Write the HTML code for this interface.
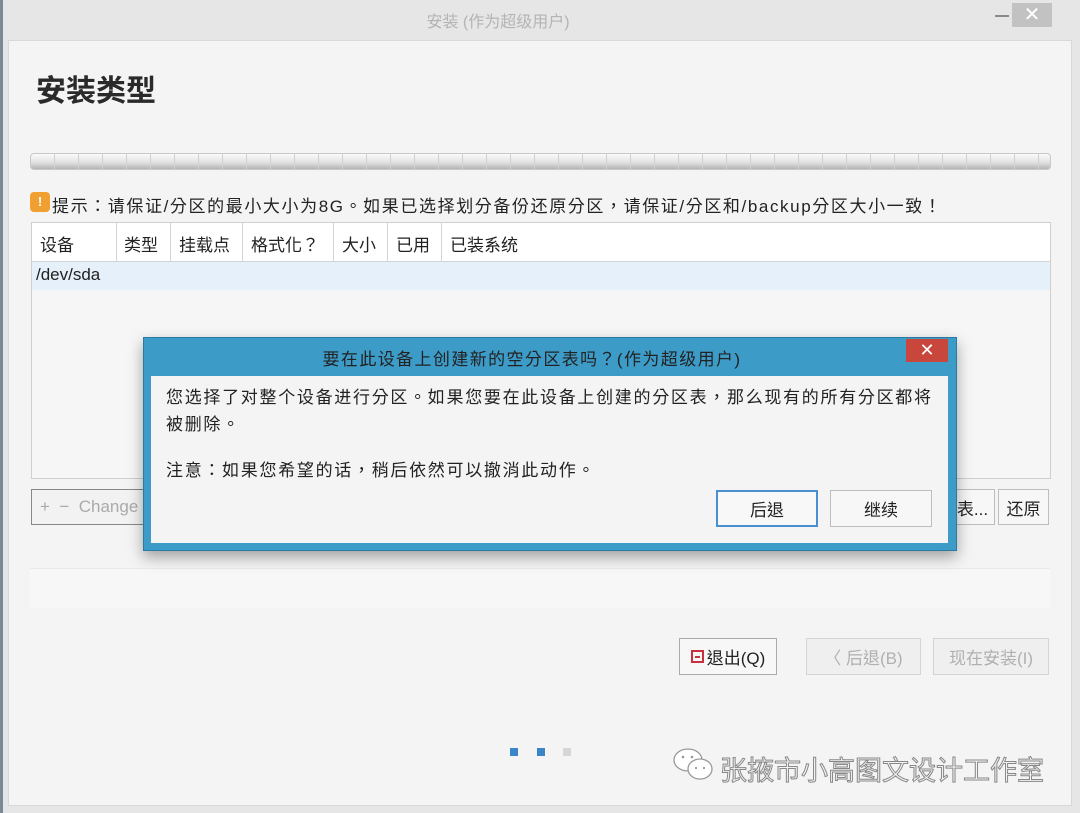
<!DOCTYPE html>
<html><head><meta charset="utf-8"><style>
*{margin:0;padding:0;box-sizing:border-box}
body{width:1080px;height:813px;background:#e6e6e6;position:relative;overflow:hidden;font-family:"Liberation Sans","Noto Sans CJK TC",sans-serif;color:#222}
.a{position:absolute}
.win{left:8px;top:40px;width:1064px;height:766px;background:#f4f4f4;border:1px solid #d8d8d8}
.btn{position:absolute;border:1px solid #bdbdbd;background:#f7f7f7;font-size:17px;text-align:center;display:flex;align-items:center;justify-content:center}
</style></head><body>
<div class="a" style="left:0;top:0;width:3px;height:813px;background:#7a8a95"></div>
<div class="a" style="left:0;top:8px;width:1080px;text-align:center;font-size:16px;color:#b4b4b4"><span style="position:relative;left:-42px">安装 (作为超级用户)</span></div>
<div class="a" style="left:995px;top:15px;width:14px;height:2px;background:#8a8a8a"></div>
<div class="a" style="left:1012px;top:3px;width:40px;height:24px;background:#c2c2c2;color:#fff;font-size:20px;text-align:center;line-height:24px">✕</div>
<div class="a win"></div>
<div class="a" style="left:36px;top:66px;font-size:30px;font-weight:bold;color:#2a2a2a">安装类型</div>
<div class="a" style="left:30px;top:153px;width:1021px;height:17px;border-radius:4px;border:1px solid #c8c8c8;background-image:repeating-linear-gradient(90deg,transparent 0 23px,#d0d0d0 23px 24px),linear-gradient(#fafafa,#e2e2e2 55%,#b5b5b5)"></div>
<div class="a" style="left:30px;top:192px;width:20px;height:20px;border-radius:4px;background:#f0a030;color:#fff;font-size:13px;text-align:center;line-height:20px;font-weight:bold">!</div>
<div class="a" style="left:52px;top:192px;font-size:17px;color:#222;white-space:nowrap;letter-spacing:1.6px">提示：请保证/分区的最小大小为8G。如果已选择划分备份还原分区，请保证/分区和/backup分区大小一致！</div>
<div class="a" style="left:31px;top:222px;width:1020px;height:257px;background:#f6f6f6;border:1px solid #cfcfcf"></div>
<div class="a" style="left:32px;top:223px;width:1018px;height:39px;background:#fff;border-bottom:1px solid #d4d4d4"></div>
<div class="a" style="left:32px;top:262px;width:1018px;height:28px;background:#e5f0fb"></div>
<div class="a" style="left:116px;top:223px;width:1px;height:39px;background:#d4d4d4"></div>
<div class="a" style="left:170px;top:223px;width:1px;height:39px;background:#d4d4d4"></div>
<div class="a" style="left:242px;top:223px;width:1px;height:39px;background:#d4d4d4"></div>
<div class="a" style="left:333px;top:223px;width:1px;height:39px;background:#d4d4d4"></div>
<div class="a" style="left:387px;top:223px;width:1px;height:39px;background:#d4d4d4"></div>
<div class="a" style="left:441px;top:223px;width:1px;height:39px;background:#d4d4d4"></div>
<div class="a" style="top:231px;left:40px;font-size:17px">设备</div>
<div class="a" style="top:231px;left:124px;font-size:17px">类型</div>
<div class="a" style="top:231px;left:179px;font-size:17px">挂载点</div>
<div class="a" style="top:231px;left:251px;font-size:17px">格式化？</div>
<div class="a" style="top:231px;left:342px;font-size:17px">大小</div>
<div class="a" style="top:231px;left:396px;font-size:17px">已用</div>
<div class="a" style="top:231px;left:450px;font-size:17px">已装系统</div>
<div class="a" style="top:265px;left:36px;font-size:17px">/dev/sda</div>
<div class="a" style="left:31px;top:489px;width:200px;height:36px;border:1px solid #888;background:#f2f2f2;color:#aaa;font-size:17px;padding:7px 0 0 8px">+&nbsp;&nbsp;−&nbsp;&nbsp;Change</div>
<div class="btn" style="left:950px;top:489px;width:45px;height:36px">表...</div>
<div class="btn" style="left:998px;top:489px;width:51px;height:36px">还原</div>
<div class="a" style="left:30px;top:568px;width:1020px;height:40px;background:#f7f7f7;border-top:1px solid #eaeaea"></div>
<!-- dialog -->
<div class="a" style="left:143px;top:337px;width:814px;height:214px;background:#3d9bc8;border:1px solid #2d7aa0;box-shadow:0 6px 14px rgba(0,0,0,.35)"></div>
<div class="a" style="left:143px;top:345px;width:814px;text-align:center;font-size:17px;color:#222;letter-spacing:1.4px"><span style="position:relative;left:-18px">要在此设备上创建新的空分区表吗？(作为超级用户)</span></div>
<div class="a" style="left:906px;top:339px;width:42px;height:23px;background:#c9463d;color:#fff;text-align:center;font-size:18px;line-height:23px">✕</div>
<div class="a" style="left:151px;top:376px;width:797px;height:167px;background:#f4f4f4"></div>
<div class="a" style="left:166px;top:384px;width:790px;font-size:17px;line-height:27px;letter-spacing:1.7px;white-space:nowrap">您选择了对整个设备进行分区。如果您要在此设备上创建的分区表，那么现有的所有分区都将<br>被删除。</div>
<div class="a" style="left:166px;top:456px;font-size:17px;letter-spacing:1.7px">注意：如果您希望的话，稍后依然可以撤消此动作。</div>
<div class="btn" style="left:716px;top:490px;width:102px;height:37px;border:2px solid #4a90d0;background:#f8f8f8">后退</div>
<div class="btn" style="left:830px;top:490px;width:102px;height:37px">继续</div>
<!-- bottom -->
<div class="btn" style="left:679px;top:638px;width:98px;height:37px;border-color:#aaa"><span style="display:inline-block;width:13px;height:13px;border:2px solid #c83040;margin-right:3px;position:relative"><span style="position:absolute;left:2px;top:4px;width:5px;height:2px;background:#c83040"></span></span>退出(Q)</div>
<div class="btn" style="left:806px;top:638px;width:115px;height:37px;color:#b0b0b0;background:#efefef;border-color:#d4d4d4">〈 后退(B)</div>
<div class="btn" style="left:933px;top:638px;width:116px;height:37px;color:#b0b0b0;background:#efefef;border-color:#d4d4d4">现在安装(I)</div>
<div class="a" style="left:510px;top:748px;width:8px;height:8px;background:#3a84c8"></div>
<div class="a" style="left:537px;top:748px;width:8px;height:8px;background:#3a84c8"></div>
<div class="a" style="left:563px;top:748px;width:8px;height:8px;background:#d6d6d6"></div>
<svg class="a" style="left:672px;top:746px" width="44" height="38" viewBox="0 0 44 38"><ellipse cx="16" cy="14" rx="14" ry="11" fill="#fff" stroke="#999" stroke-width="1.3"/><ellipse cx="28" cy="23" rx="12" ry="10" fill="#fff" stroke="#999" stroke-width="1.3"/><circle cx="11" cy="11" r="1.3" fill="#999"/><circle cx="20" cy="11" r="1.3" fill="#999"/><circle cx="24" cy="22" r="1.1" fill="#999"/><circle cx="32" cy="22" r="1.1" fill="#999"/></svg>
<div class="a" style="left:720px;top:749px;font-size:27px;color:#f4f4f4;-webkit-text-stroke:1px #888">张掖市小高图文设计工作室</div>
</body></html>
